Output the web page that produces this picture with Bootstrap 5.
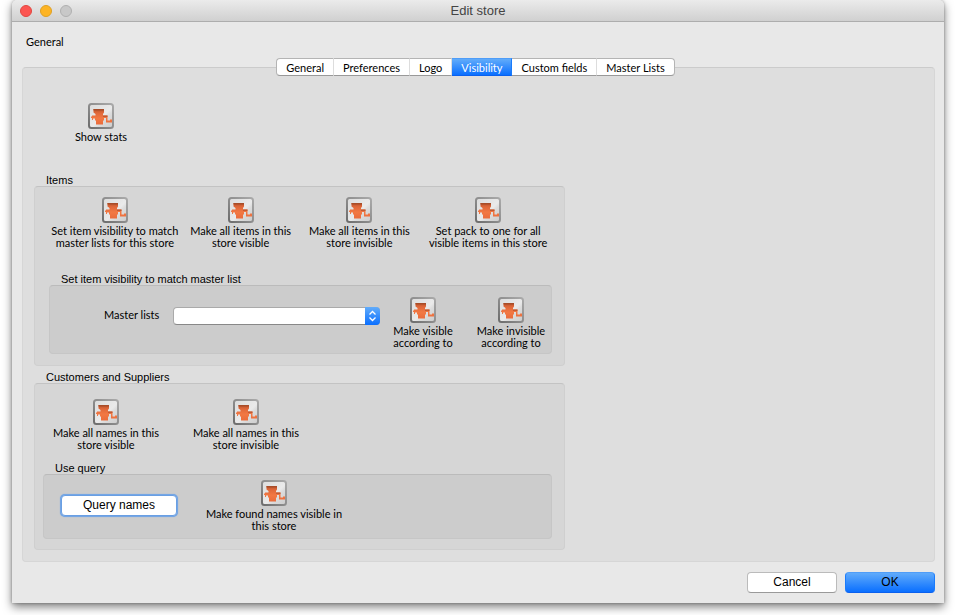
<!DOCTYPE html>
<html lang="en">
<head>
<meta charset="utf-8">
<meta name="viewport" content="width=device-width, initial-scale=1">
<title>Edit store</title>
<link rel="stylesheet" href="https://cdn.jsdelivr.net/npm/bootstrap@5.3.0/dist/css/bootstrap.min.css">
<style>
  body { background: #fff; color: #000; font: 11px/12px Lato, "Open Sans", sans-serif; overflow-x: hidden; }
  .win { margin: 0 12px 12px; background: #e8e8e8; box-shadow: 0 4px 10px rgba(0,0,0,.5), 0 0 3px rgba(0,0,0,.3); border-radius: 5px 5px 0 0; }
  .titlebar { height: 22px; border-bottom: 1px solid #adadad; background: linear-gradient(#ebebeb, #d0d0d0); border-radius: 5px 5px 0 0; padding: 0 8px; }
  .titlebar h1 { font: 13px/22px "Liberation Sans", Arial, sans-serif; color: #444; }
  .lights { flex: 1 1 0; gap: 8px; }
  .light { width: 12px; height: 12px; border-radius: 50%; border: 1px solid #e2463f; background: #fc5551; padding: 0; }
  .light-min { border-color: #dfa023; background: #fdb424; }
  .light-off { border-color: #b0b0b0; background: #c8c8c8; }
  .content { padding: 14px 9px 10px 10px; }
  .page-name { font: inherit; padding: 0 4px; margin-bottom: 10px; }
  .segments { margin-bottom: -9px; padding-right: 6px; position: relative; z-index: 1; }
  .segments .btn { font: inherit; height: 18px; padding: 2px 9px 0; background: #fff; color: #000; border: 1px solid #b4b4b4; border-left: 0; border-right-color: #ddd; border-bottom-color: #999; border-radius: 0; flex: none; }
  .segments .btn:first-child { border-radius: 4px 0 0 4px; border-left: 1px solid #b4b4b4; }
  .segments .btn:last-child { border-radius: 0 4px 4px 0; border-right-color: #b4b4b4; }
  .segments .btn.active { color: #fff; border-color: #4f9df8 #1a7bfb #0a60ee; background: linear-gradient(#62acfa, #0a6fff); }
  .pane { background: #dedede; border: 1px solid #d6d6d6; border-top-color: #cbcbcb; border-radius: 4px; padding: 35px 11px 11px; }
  .group-title { font: 11px/12px "Liberation Sans", Arial, sans-serif; margin: 0; padding: 0 12px; }
  .group { max-width: 531px; }
  .group + .group { margin-top: 5px; }
  .box { background: #d6d6d6; border: 1px solid #cfcfcf; border-top-color: #c3c3c3; border-radius: 4px; }
  .box .box { background: #ccc; border-color: #c6c6c6; border-top-color: #bbb; }
  .tool { font: inherit; color: #000; padding: 0; border: 0; background: none; display: flex; flex-direction: column; align-items: center; gap: 2px; white-space: nowrap; }
  .tool svg { width: 26px; height: 26px; }
  .stats { width: 60px; margin: 0 0 31px 37px; }
  .items-row { display: grid; grid-template-columns: 132fr 120fr 118fr 140fr; padding: 10px 6px 0 14px; }
  .items-sub { padding: 24px 12px 11px 14px; }
  .list-row { height: 69px; padding: 11px 0 0 54px; }
  .list-row label { padding-top: 12px; width: 69px; }
  .picker { flex: 1 1 0; margin: 10px 5px 0 0; height: 18px; }
  .picker select { font: inherit; height: 18px; min-height: 0; padding: 0 18px 0 6px; border: 1px solid #aaa; border-bottom-color: #888; border-radius: 4px; background: #fff; }
  .picker svg { position: absolute; right: 0; top: 0; width: 15px; height: 18px; pointer-events: none; }
  .visible-col { width: 76px; margin-right: 10px; }
  .invisible-col { width: 80px; }
  .names-row { display: grid; grid-template-columns: 140px 140px; padding: 15px 0 0 1px; }
  .names-sub { padding: 11px 12px 10px 8px; }
  .query-row { height: 65px; padding: 5px 17px 0; gap: 27px; }
  .push { font: 12px/16px "Liberation Sans", Arial, sans-serif; color: #000; background: #fff; height: 21px; padding: 0 0 1px; border: 1px solid #bbb; border-bottom-color: #999; border-radius: 4px; width: 90px; }
  .push-query { width: 116px; margin-top: 15px; border-color: #6a9fe3; box-shadow: 0 0 0 1px #75a6e4, 0 0 1px 1px #75a6e4; }
  .push-ok { background: linear-gradient(#60abfb, #0a6fff); border-color: #4f9df8 #1a7bfb #0a60ee; }
  .found { width: 140px; }
  .actions { padding-top: 10px; gap: 8px; }
</style>
<script src="https://cdn.jsdelivr.net/npm/bootstrap@5.3.0/dist/js/bootstrap.bundle.min.js"></script>
</head>
<body>
<svg width="0" height="0" class="position-absolute" aria-hidden="true">
  <defs>
    <linearGradient id="rim" x1="1" y1="0" x2="0" y2="1"><stop offset="0" stop-color="#aaa"/><stop offset=".5" stop-color="#8e8e8e"/><stop offset="1" stop-color="#6c6c6c"/></linearGradient>
    <linearGradient id="plate" x1="0" y1="0" x2="1" y2="1"><stop offset="0" stop-color="#dcdcdc"/><stop offset=".55" stop-color="#eaeaea"/><stop offset=".65" stop-color="#dcdcdc"/><stop offset="1" stop-color="#cccccc"/></linearGradient>
    <linearGradient id="metal" x1="0" y1="0" x2="0" y2="1"><stop offset="0" stop-color="#b8522a"/><stop offset=".25" stop-color="#e0683a"/><stop offset=".6" stop-color="#f27843"/><stop offset="1" stop-color="#ea6c3c"/></linearGradient>
    <linearGradient id="blue" x1="0" y1="0" x2="0" y2="1"><stop offset="0" stop-color="#62acfa"/><stop offset="1" stop-color="#0a6fff"/></linearGradient>
    <symbol id="grinder" viewBox="0 0 26 26">
      <rect x="1" y="1" width="24" height="24" rx="2.5" fill="url(#plate)" stroke="url(#rim)" stroke-width="2"/>
      <path d="M5.500 6H16V9.500L15 11V12.500H19.500V17.500H22V16.500H24V19.500H18V15H16V17L15 18V21.500H8V18L7 17V15.500H5V17H4V15H3V13.500H4V12.500H7.500V11L5.500 9.500Z" fill="url(#metal)"/>
      <path d="M5.500 6H16V7.500H5.500Z" fill="#a84c28"/>
      <path d="M15 12.500H19.500V14H15Z" fill="#c05a33"/>
    </symbol>
  </defs>
</svg>
<main class="win">
  <header class="titlebar d-flex align-items-center">
    <div class="lights d-flex">
      <button class="light" type="button" aria-label="Close"></button>
      <button class="light light-min" type="button" aria-label="Minimize"></button>
      <button class="light light-off" type="button" aria-label="Zoom" disabled></button>
    </div>
    <h1 class="m-0">Edit store</h1>
    <div class="lights"></div>
  </header>
  <div class="content">
    <h2 class="page-name">General</h2>
    <div class="segments d-flex justify-content-center" role="tablist">
      <button class="btn" type="button" role="tab">General</button>
      <button class="btn" type="button" role="tab">Preferences</button>
      <button class="btn" type="button" role="tab">Logo</button>
      <button class="btn active" type="button" role="tab" aria-selected="true">Visibility</button>
      <button class="btn" type="button" role="tab">Custom fields</button>
      <button class="btn" type="button" role="tab">Master Lists</button>
    </div>
    <div class="pane" role="tabpanel">
      <button class="tool stats" type="button"><svg><use href="#grinder"/></svg><span>Show stats</span></button>
      <section class="group">
        <h3 class="group-title">Items</h3>
        <div class="box">
          <div class="items-row">
            <button class="tool" type="button"><svg><use href="#grinder"/></svg><span>Set item visibility to match<br>master lists for this store</span></button>
            <button class="tool" type="button"><svg><use href="#grinder"/></svg><span>Make all items in this<br>store visible</span></button>
            <button class="tool" type="button"><svg><use href="#grinder"/></svg><span>Make all items in this<br>store invisible</span></button>
            <button class="tool" type="button"><svg><use href="#grinder"/></svg><span>Set pack to one for all<br>visible items in this store</span></button>
          </div>
          <div class="items-sub">
            <h4 class="group-title">Set item visibility to match master list</h4>
            <div class="box list-row d-flex align-items-start">
              <label for="lists">Master lists</label>
              <div class="picker position-relative">
                <select id="lists" class="form-select"><option></option></select>
                <svg viewBox="0 0 15 18" aria-hidden="true"><path d="M0 0H11a4 4 0 0 1 4 4V14a4 4 0 0 1-4 4H0Z" fill="url(#blue)"/><path d="M4.500 7.500L7.500 4.500L10.500 7.500M4.500 10.500L7.500 13.500L10.500 10.500" fill="none" stroke="#fff" stroke-width="1.300"/></svg>
              </div>
              <button class="tool visible-col" type="button"><svg><use href="#grinder"/></svg><span>Make visible<br>according to</span></button>
              <button class="tool invisible-col" type="button"><svg><use href="#grinder"/></svg><span>Make invisible<br>according to</span></button>
            </div>
          </div>
        </div>
      </section>
      <section class="group">
        <h3 class="group-title">Customers and Suppliers</h3>
        <div class="box">
          <div class="names-row">
            <button class="tool" type="button"><svg><use href="#grinder"/></svg><span>Make all names in this<br>store visible</span></button>
            <button class="tool" type="button"><svg><use href="#grinder"/></svg><span>Make all names in this<br>store invisible</span></button>
          </div>
          <div class="names-sub">
            <h4 class="group-title">Use query</h4>
            <div class="box query-row d-flex align-items-start">
              <button class="push push-query" type="button">Query names</button>
              <button class="tool found" type="button"><svg><use href="#grinder"/></svg><span>Make found names visible in<br>this store</span></button>
            </div>
          </div>
        </div>
      </section>
    </div>
    <div class="actions d-flex justify-content-end">
      <button class="push" type="button">Cancel</button>
      <button class="push push-ok" type="button">OK</button>
    </div>
  </div>
</main>
</body>
</html>
